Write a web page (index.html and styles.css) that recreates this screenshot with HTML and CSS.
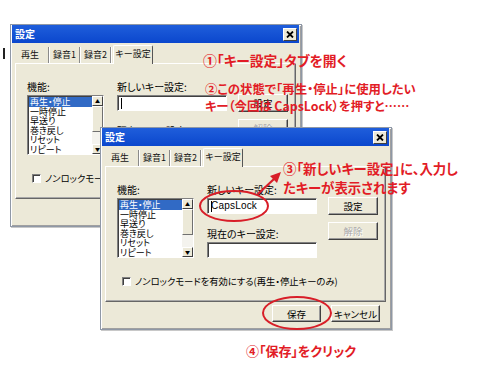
FILE: index.html
```html
<!DOCTYPE html>
<html lang="ja">
<head>
<meta charset="utf-8">
<link rel="stylesheet" href="styles.css">
</head>
<body>
<div class="canvas">
  <div class="cursor-mark"></div>

  <div class="win back">
    <div class="title"><span>設定</span><span class="close"><svg width="8" height="7" viewBox="0 0 8 7"><path d="M1 0.5L7 6.5M7 0.5L1 6.5" stroke="#000" stroke-width="1.8"/></svg></span></div>
    <div class="tabs">
      <div class="tab t1">再生</div>
      <div class="tab t2">録音1</div>
      <div class="tab t3">録音2</div>
      <div class="tab active">キー設定</div>
    </div>
    <div class="panel">
      <div class="cols">
        <div class="col-left">
          <div class="lbl">機能:</div>
          <div class="listbox">
            <div class="items">
              <div class="item sel">再生・停止</div>
              <div class="item">一時停止</div>
              <div class="item">早送り</div>
              <div class="item">巻き戻し</div>
              <div class="item">リセット</div>
              <div class="item">リピート</div>
              <div class="item">逆再生</div>
            </div>
            <div class="sbar"><div class="sbtn">▲</div><div class="thumb"></div><div class="strack"></div><div class="sbtn">▼</div></div>
          </div>
        </div>
        <div class="col-mid">
          <div class="lbl">新しいキー設定:</div>
          <div class="field"><span class="caret"></span></div>
          <div class="lbl lbl2">現在のキー設定:</div>
          <div class="field"></div>
        </div>
        <div class="col-right">
          <div class="btn">設定</div>
          <div class="btn dis">解除</div>
        </div>
      </div>
      <div class="check"><span class="box"></span><span>ノンロックモードを有効にする(再生・停止キーのみ)</span></div>
    </div>
    <div class="footer">
      <div class="btn wide">保存</div>
      <div class="btn wide">キャンセル</div>
    </div>
  </div>

  <div class="win front">
    <div class="title"><span>設定</span><span class="close"><svg width="8" height="7" viewBox="0 0 8 7"><path d="M1 0.5L7 6.5M7 0.5L1 6.5" stroke="#000" stroke-width="1.8"/></svg></span></div>
    <div class="tabs">
      <div class="tab t1">再生</div>
      <div class="tab t2">録音1</div>
      <div class="tab t3">録音2</div>
      <div class="tab active">キー設定</div>
    </div>
    <div class="panel">
      <div class="cols">
        <div class="col-left">
          <div class="lbl">機能:</div>
          <div class="listbox">
            <div class="items">
              <div class="item sel">再生・停止</div>
              <div class="item">一時停止</div>
              <div class="item">早送り</div>
              <div class="item">巻き戻し</div>
              <div class="item">リセット</div>
              <div class="item">リピート</div>
              <div class="item">逆再生</div>
            </div>
            <div class="sbar"><div class="sbtn">▲</div><div class="thumb"></div><div class="strack"></div><div class="sbtn">▼</div></div>
          </div>
        </div>
        <div class="col-mid">
          <div class="lbl">新しいキー設定:</div>
          <div class="field"><span class="caret"></span><span class="val">CapsLock</span></div>
          <div class="lbl lbl2">現在のキー設定:</div>
          <div class="field"></div>
        </div>
        <div class="col-right">
          <div class="btn">設定</div>
          <div class="btn dis">解除</div>
        </div>
      </div>
      <div class="check"><span class="box"></span><span>ノンロックモードを有効にする(再生・停止キーのみ)</span></div>
    </div>
    <div class="footer">
      <div class="btn wide">保存</div>
      <div class="btn wide">キャンセル</div>
    </div>
  </div>

  <svg class="marks" width="482" height="368" viewBox="0 0 482 368">
    <ellipse cx="234" cy="206" rx="34" ry="15" fill="none" stroke="#d81e28" stroke-width="2"/>
    <ellipse cx="297" cy="313" rx="34" ry="16" fill="none" stroke="#d81e28" stroke-width="2"/>
    <path d="M258 194L274 179" stroke="#d81e28" stroke-width="2.2" fill="none"/>
    <path d="M281 172L270 176L277 183Z" fill="#d81e28"/>
  </svg>

  <div class="note n1">①「キー設定」タブを開く</div>
  <div class="note n2">②この状態で「再生・停止」に使用したい<br>キー（今回は CapsLock）を押すと……</div>
  <div class="note n3">③「新しいキー設定」に、入力し<br>たキーが表示されます</div>
  <div class="note n4">④「保存」をクリック</div>
</div>
</body>
</html>
```

FILE: styles.css
```css
* { box-sizing: border-box; }
body { margin: 0; background: #fff; font-family: "Noto Sans CJK JP", "Noto Sans", sans-serif; }
.canvas { position: relative; width: 482px; height: 368px; overflow: hidden; background: #fff; }

.cursor-mark { position: absolute; left: 3px; top: 48px; width: 2px; height: 11px; background: #222; }

.win {
  position: absolute; width: 292px; height: 203px;
  background: #ece9d8;
  border: 1px solid #8f98a6;
  box-shadow: inset 1px 1px 0 #fff, inset -1px -1px 0 #a0a0a0, 1px 1px 0 #c8c8c8;
  padding: 0 2px 2px 1px;
  display: flex; flex-direction: column;
  font-size: 10px; line-height: 12px; color: #000;
  font-feature-settings: "palt";
}
.win.back { left: 10px; top: 24px; }
.win.front { left: 100px; top: 127px; }

.title {
  height: 18px; flex: none;
  background: linear-gradient(#1f5edb, #0b47cd);
  display: flex; align-items: center; justify-content: space-between;
  padding: 0 2px 0 3px; color: #fff; font-weight: bold; font-size: 10px;
}
.close {
  width: 14px; height: 13px; background: #ece9d8;
  border: 1px solid; border-color: #fff #404040 #404040 #fff;
  display: flex; align-items: center; justify-content: center;
}

.tabs { display: flex; align-items: flex-end; height: 20px; padding-left: 5px; flex: none; font-size: 9px; }
.tab {
  height: 16px; display: flex; align-items: center; justify-content: center;
  border-right: 1px solid #8a8a8a; box-shadow: 1px 0 0 #fff;
  margin-right: 1px; color: #111; white-space: nowrap;
}
.t1 { width: 32px; padding-right: 5px; }
.t2 { width: 30px; }
.t3 { width: 30px; }
.tab.active {
  width: 40px; height: 19px; margin-left: 1px; padding-bottom: 2px;
  border-left: 1px solid #fff; border-top: 1px solid #fff; border-right: 1px solid #555;
  box-shadow: none; border-radius: 2px 2px 0 0;
  background: #ece9d8; position: relative; z-index: 1; margin-bottom: -1px;
}

.panel {
  height: 136px; margin: 0 3px 0 3px; flex: none;
  border: 1px solid; border-color: #fff #666 #666 #fff;
  box-shadow: inset -1px -1px 0 #a8a8a8;
  padding: 17px 0 0 11px;
  display: flex; flex-direction: column;
}
.cols { display: flex; }
.col-left { width: 78px; display: flex; flex-direction: column; }
.col-mid { width: 110px; margin-left: 12px; display: flex; flex-direction: column; }
.col-right { width: 50px; margin-left: 11px; padding-top: 13px; display: flex; flex-direction: column; gap: 7px; }

.lbl { height: 12px; white-space: nowrap; }
.lbl2 { margin-top: 14px; }

.listbox {
  margin-top: 2px; width: 77px; height: 60px; background: #fff;
  border: 1px solid; border-color: #808080 #fff #fff #808080;
  box-shadow: inset 1px 1px 0 #404040;
  display: flex; overflow: hidden;
}
.items { flex: 1; padding: 1px 0 0 1px; overflow: hidden; font-size: 9px; line-height: 9.6px; }
.item { height: 9.6px; white-space: nowrap; padding-left: 1px; }
.item.sel { background: #316ac5; color: #fff; }
.sbar { width: 11px; display: flex; flex-direction: column; background: #f0efe8; }
.sbtn {
  height: 10px; flex: none; background: #ece9d8; font-size: 5px; line-height: 8px; text-align: center;
  border: 1px solid; border-color: #fff #404040 #404040 #fff; color: #000;
}
.thumb { height: 26px; flex: none; background: #ece9d8; border: 1px solid; border-color: #fff #707070 #707070 #fff; }
.strack { flex: 1; background: #f4f3ee; }

.field {
  margin-top: 2px; height: 16px; width: 110px; background: #fff;
  border: 1px solid; border-color: #808080 #fff #fff #808080;
  box-shadow: inset 1px 1px 0 #404040;
  display: flex; align-items: center; padding-left: 3px; font-size: 10px;
  font-family: "Liberation Sans", "Noto Sans CJK JP", sans-serif;
}
.caret { width: 1px; height: 11px; background: #000; flex: none; }
.val { margin-left: -1px; letter-spacing: 0.2px; }

.btn {
  height: 18px; background: #ece9d8; display: flex; align-items: center; justify-content: center;
  border: 1px solid; border-color: #fff #404040 #404040 #fff;
  box-shadow: inset -1px -1px 0 #9a9a9a; white-space: nowrap; font-size: 9.5px;
}
.btn.dis { color: #a8a8a8; text-shadow: 1px 1px 0 #fff; }
.btn.wide { width: 49px; height: 17px; }

.check { margin-top: 17px; margin-left: 5px; display: flex; align-items: center; gap: 4px; white-space: nowrap; font-size: 9.3px; }
.box {
  width: 9px; height: 9px; background: #fff; flex: none;
  border: 1px solid; border-color: #808080 #fff #fff #808080; box-shadow: inset 1px 1px 0 #404040;
}

.footer { display: flex; justify-content: flex-end; gap: 10px; padding-right: 9px; margin-top: 3px; }

.marks { position: absolute; left: 0; top: 0; z-index: 5; }

.note {
  position: absolute; z-index: 6; color: #e21c26; font-weight: bold; white-space: nowrap;
  font-feature-settings: "palt";
}
.n1 { left: 203px; top: 53px; font-size: 13.8px; line-height: 15px; }
.n2 { left: 205px; top: 81px; font-size: 12.4px; line-height: 17px; }
.n3 { left: 283px; top: 159px; font-size: 13.4px; line-height: 19px; }
.n4 { left: 246px; top: 343px; font-size: 13px; line-height: 15px; }
```
